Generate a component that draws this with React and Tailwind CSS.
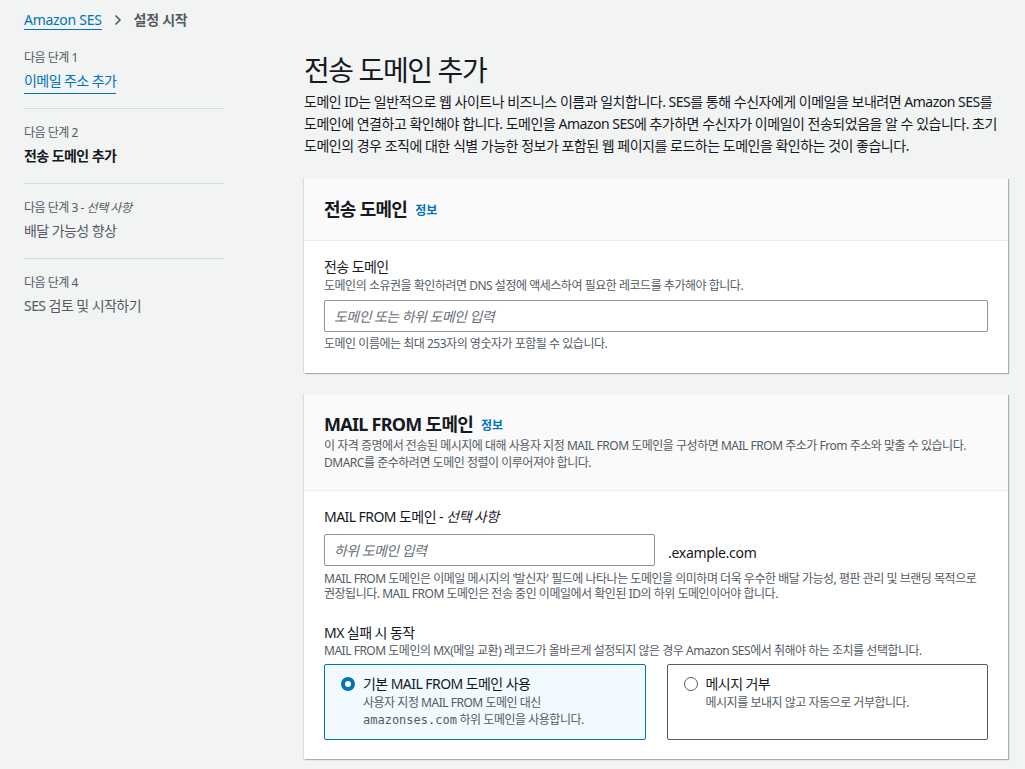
import React from 'react';

const font = { fontFamily: '"Noto Sans", "Noto Sans CJK KR", sans-serif' };

const NavStep = ({ step, optional, title, active, link, last }) => (
  <div className={`${last ? '' : 'border-b border-[#d5dbdb]'} ${link ? 'pt-0' : 'pt-[16px]'} pb-[17px]`}>
    <div className="text-[12px] leading-[16px] text-[#545b64] tracking-[-0.04em]">
      {step}
      {optional && <span> - <i>선택 사항</i></span>}
    </div>
    <div className="mt-[5px] text-[14px] leading-[20px] tracking-[-0.04em]">
      {link ? (
        <span className="text-[#0073bb] border-b border-[#0073bb] pb-[3px]">{title}</span>
      ) : (
        <span className={active ? 'font-bold text-[#16191f]' : 'text-[#545b64]'}>{title}</span>
      )}
    </div>
  </div>
);

const Radio = ({ checked }) =>
  checked ? (
    <span className="mt-[3px] w-[14px] h-[14px] shrink-0 rounded-full border-[4px] border-[#0073bb] bg-white" />
  ) : (
    <span className="mt-[3px] w-[14px] h-[14px] shrink-0 rounded-full border-[1.5px] border-[#545b64] bg-white" />
  );

const Info = () => <span className="ml-[8px] mt-[3px] text-[12px] font-bold text-[#0073bb]">정보</span>;

const cardShadow = 'bg-white shadow-[1px_1px_1px_0_rgba(0,28,36,0.3),-1px_0_1px_0_rgba(0,28,36,0.1)]';

export default function App() {
  return (
    <div style={font} className="min-h-[769px] bg-[#f2f3f3] text-[#16191f]">
      <div className="px-6 pt-[10px] flex items-center text-[14px] leading-[20px] tracking-[-0.02em]">
        <span className="text-[#0073bb] border-b border-[#0073bb] leading-[18px]">Amazon SES</span>
        <svg className="mx-[10px]" width="12" height="12" viewBox="0 0 12 12">
          <path d="M3.5 1.5 8 6l-4.5 4.5" fill="none" stroke="#545b64" strokeWidth="1.6" />
        </svg>
        <span className="text-[#545b64] font-semibold">설정 시작</span>
      </div>

      <div className="flex pl-6">
        <nav className="w-[200px] shrink-0 pt-[20px]">
          <NavStep step="다음 단계 1" title="이메일 주소 추가" link />
          <NavStep step="다음 단계 2" title="전송 도메인 추가" active />
          <NavStep step="다음 단계 3" optional title="배달 가능성 향상" />
          <NavStep step="다음 단계 4" title="SES 검토 및 시작하기" last />
        </nav>

        <main className="ml-[80px] w-[704px] shrink-0 pt-[20px] pb-[20px]">
          <h1 className="text-[28px] leading-[40px] font-normal tracking-[-0.05em]">전송 도메인 추가</h1>
          <p className="mt-[1px] text-[14px] leading-[22px] text-[#16191f] tracking-[-0.035em] whitespace-nowrap">
            도메인 ID는 일반적으로 웹 사이트나 비즈니스 이름과 일치합니다. SES를 통해 수신자에게 이메일을 보내려면 Amazon SES를
            <br />
            도메인에 연결하고 확인해야 합니다. 도메인을 Amazon SES에 추가하면 수신자가 이메일이 전송되었음을 알 수 있습니다. 초기
            <br />
            도메인의 경우 조직에 대한 식별 가능한 정보가 포함된 웹 페이지를 로드하는 도메인을 확인하는 것이 좋습니다.
          </p>

          <section className={`mt-[21px] ${cardShadow}`}>
            <div className="bg-[#fafafa] border-b border-[#eaeded] px-5 py-[20px] flex items-center">
              <h2 className="text-[18px] leading-[22px] font-bold tracking-[-0.04em]">전송 도메인</h2>
              <Info />
            </div>
            <div className="px-5 pt-[16px] pb-[21px]">
              <div className="text-[14px] leading-[20px] tracking-[-0.04em]">전송 도메인</div>
              <div className="text-[12px] leading-[17px] text-[#545b64] tracking-[-0.04em]">
                도메인의 소유권을 확인하려면 DNS 설정에 액세스하여 필요한 레코드를 추가해야 합니다.
              </div>
              <div className="mt-[6px] h-[32px] border border-[#879596] rounded-[2px] flex items-center px-[9px] text-[14px] italic text-[#687078] tracking-[-0.04em]">
                도메인 또는 하위 도메인 입력
              </div>
              <div className="mt-[4px] text-[12px] leading-[16px] text-[#545b64] tracking-[-0.04em]">
                도메인 이름에는 최대 253자의 영숫자가 포함될 수 있습니다.
              </div>
            </div>
          </section>

          <section className={`mt-[21px] ${cardShadow}`}>
            <div className="bg-[#fafafa] border-b border-[#eaeded] px-5 pt-[19px] pb-[19px]">
              <div className="flex items-center">
                <h2 className="text-[18px] leading-[22px] font-bold tracking-[-0.04em]">MAIL FROM 도메인</h2>
                <Info />
              </div>
              <p className="mt-[2px] text-[12px] leading-[17px] text-[#545b64] tracking-[-0.04em] whitespace-nowrap">
                이 자격 증명에서 전송된 메시지에 대해 사용자 지정 MAIL FROM 도메인을 구성하면 MAIL FROM 주소가 From 주소와 맞출 수 있습니다.
                <br />
                DMARC를 준수하려면 도메인 정렬이 이루어져야 합니다.
              </p>
            </div>
            <div className="px-5 pt-[16px] pb-[19px]">
              <div className="text-[14px] leading-[20px] tracking-[-0.04em]">
                MAIL FROM 도메인 - <i>선택 사항</i>
              </div>
              <div className="mt-[7px] flex items-center">
                <div className="w-[331px] h-[32px] border border-[#879596] rounded-[2px] flex items-center px-[9px] text-[14px] italic text-[#687078] tracking-[-0.04em]">
                  하위 도메인 입력
                </div>
                <span className="ml-[13px] mt-[4px] text-[14px] tracking-[-0.02em]">.example.com</span>
              </div>
              <p className="mt-[5px] text-[12px] leading-[15px] text-[#545b64] tracking-[-0.04em] whitespace-nowrap">
                MAIL FROM 도메인은 이메일 메시지의 '발신자' 필드에 나타나는 도메인을 의미하며 더욱 우수한 배달 가능성, 평판 관리 및 브랜딩 목적으로
                <br />
                권장됩니다. MAIL FROM 도메인은 전송 중인 이메일에서 확인된 ID의 하위 도메인이어야 합니다.
              </p>

              <div className="mt-[22px] text-[14px] leading-[20px] tracking-[-0.04em]">MX 실패 시 동작</div>
              <div className="text-[12px] leading-[16px] text-[#545b64] tracking-[-0.04em]">
                MAIL FROM 도메인의 MX(메일 교환) 레코드가 올바르게 설정되지 않은 경우 Amazon SES에서 취해야 하는 조치를 선택합니다.
              </div>
              <div className="mt-[5px] grid grid-cols-2 gap-[21px]">
                <div className="h-[76px] border border-[#0073bb] rounded-[2px] bg-[#f1faff] pl-[16px] pt-[9px] flex gap-[8px]">
                  <Radio checked />
                  <div>
                    <div className="text-[14px] leading-[20px] tracking-[-0.04em]">기본 MAIL FROM 도메인 사용</div>
                    <div className="text-[12px] leading-[17px] text-[#545b64] tracking-[-0.04em]">
                      사용자 지정 MAIL FROM 도메인 대신
                      <br />
                      <span style={{ fontFamily: '"DejaVu Sans Mono", monospace' }} className="tracking-normal text-[12px]">amazonses.com</span> 하위 도메인을 사용합니다.
                    </div>
                  </div>
                </div>
                <div className="h-[76px] border border-[#545b64] rounded-[2px] bg-white pl-[16px] pt-[9px] flex gap-[8px]">
                  <Radio />
                  <div>
                    <div className="text-[14px] leading-[20px] tracking-[-0.04em]">메시지 거부</div>
                    <div className="text-[12px] leading-[17px] text-[#545b64] tracking-[-0.04em]">메시지를 보내지 않고 자동으로 거부합니다.</div>
                  </div>
                </div>
              </div>
            </div>
          </section>
        </main>
      </div>
    </div>
  );
}
